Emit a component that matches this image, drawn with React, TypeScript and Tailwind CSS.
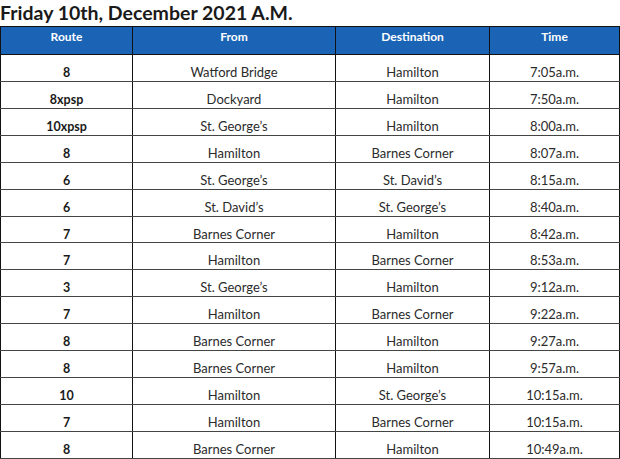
const rows: [string, string, string, string][] = [
  ['8', 'Watford Bridge', 'Hamilton', '7:05a.m.'],
  ['8xpsp', 'Dockyard', 'Hamilton', '7:50a.m.'],
  ['10xpsp', 'St. George’s', 'Hamilton', '8:00a.m.'],
  ['8', 'Hamilton', 'Barnes Corner', '8:07a.m.'],
  ['6', 'St. George’s', 'St. David’s', '8:15a.m.'],
  ['6', 'St. David’s', 'St. George’s', '8:40a.m.'],
  ['7', 'Barnes Corner', 'Hamilton', '8:42a.m.'],
  ['7', 'Hamilton', 'Barnes Corner', '8:53a.m.'],
  ['3', 'St. George’s', 'Hamilton', '9:12a.m.'],
  ['7', 'Hamilton', 'Barnes Corner', '9:22a.m.'],
  ['8', 'Barnes Corner', 'Hamilton', '9:27a.m.'],
  ['8', 'Barnes Corner', 'Hamilton', '9:57a.m.'],
  ['10', 'Hamilton', 'St. George’s', '10:15a.m.'],
  ['7', 'Hamilton', 'Barnes Corner', '10:15a.m.'],
  ['8', 'Barnes Corner', 'Hamilton', '10:49a.m.'],
];

const cell = 'border-x-[1.5px] border-x-[#111] border-y border-y-[#444] text-center align-top pt-[11px] pb-0 leading-[13px]';

export default function App() {
  return (
    <div className="w-[620px] h-[459px] bg-white overflow-hidden font-['Lato','Liberation_Sans',sans-serif]">
      <h1 className="text-[19.5px] leading-[26px] font-bold text-[#1a1a1a]">
        Friday 10th, December 2021 A.M.
      </h1>
      <table className="w-[619px] border-collapse table-fixed border-[1.5px] border-[#111]">
        <colgroup>
          <col className="w-[132px]" />
          <col className="w-[203px]" />
          <col className="w-[154px]" />
          <col className="w-[130px]" />
        </colgroup>
        <thead>
          <tr className="h-[28px] bg-[#1a63b5] text-white text-[12px] font-bold">
            {['Route', 'From', 'Destination', 'Time'].map((h) => (
              <th key={h} className="border-[1.5px] border-[#111] text-center align-top pt-[3px] pb-0 leading-[14px]">
                {h}
              </th>
            ))}
          </tr>
        </thead>
        <tbody>
          {rows.map((r, i) => (
            <tr key={i} className="h-[26.93px] text-[13px] text-[#2b2b2b]">
              <td className={`${cell} font-bold text-[12.5px] text-[#1a1a1a]`}>{r[0]}</td>
              <td className={cell}>{r[1]}</td>
              <td className={cell}>{r[2]}</td>
              <td className={cell}>{r[3]}</td>
            </tr>
          ))}
        </tbody>
      </table>
    </div>
  );
}
